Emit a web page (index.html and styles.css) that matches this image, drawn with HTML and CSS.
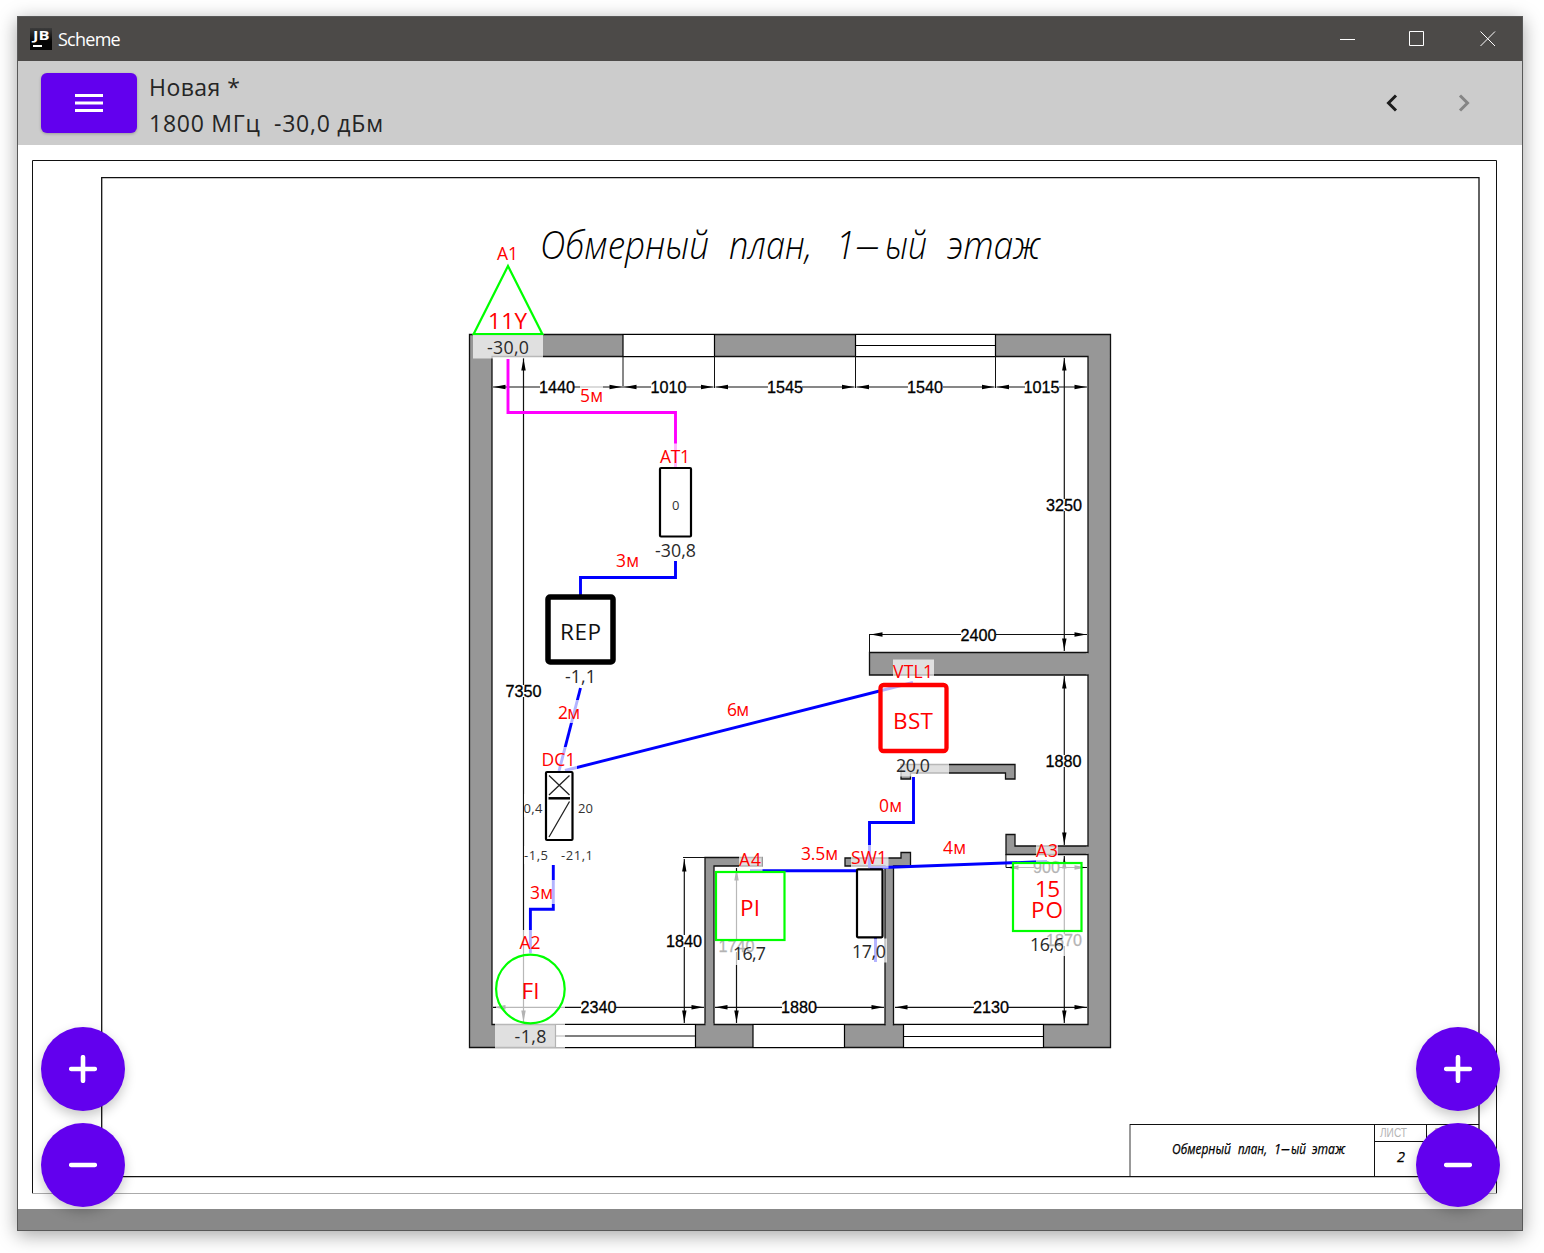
FILE: index.html
```html
<!DOCTYPE html>
<html lang="ru">
<head>
<meta charset="utf-8">
<title>Scheme</title>
<link rel="stylesheet" href="styles.css">
</head>
<body>
<div class="window">
  <header class="titlebar">
    <svg class="logo" viewBox="0 0 22 22" width="22" height="22">
      <defs><linearGradient id="lg" x1="0" y1="0" x2="0" y2="1"><stop offset="0" stop-color="#3c3c3c"/><stop offset="0.6" stop-color="#050505"/></linearGradient></defs>
      <rect width="22" height="22" fill="url(#lg)"/>
      <text x="3" y="12.4" textLength="16.500" lengthAdjust="spacingAndGlyphs">JB</text>
      <rect x="3" y="17" width="9" height="2" fill="#fff"/>
    </svg>
    <span class="app-name">Scheme</span>
    <svg class="win-controls" viewBox="0 0 156 16" width="156" height="16">
      <path d="M0 8.5H15M69.5 .5h14v14h-14zM140.5 .5l14.5 14.5M155 .5l-14.500 14.500"/>
    </svg>
  </header>
  <div class="toolbar">
    <button class="menu" aria-label="Меню"><svg viewBox="0 0 28 18" width="28" height="18"><path d="M0 1.500H28M0 9H28M0 16.500H28"/></svg></button>
    <div class="info">
      <div class="name">Новая *</div>
      <div class="params">1800 МГц&nbsp; -30,0 дБм</div>
    </div>
    <div class="history">
      <svg viewBox="0 0 12 18" width="12" height="18"><path class="on" d="M10 1.500L2.500 9L10 16.500"/></svg>
      <svg viewBox="0 0 12 18" width="12" height="18"><path class="off" d="M2 1.500L9.500 9L2 16.500"/></svg>
    </div>
  </div>
  <main class="canvas">
    <svg class="plan" viewBox="18 145 1504 1064" width="1504" height="1064">
      <defs>
        <marker id="arr" viewBox="0 0 13 6" markerWidth="13" markerHeight="6" refX="13" refY="3" orient="auto-start-reverse" markerUnits="userSpaceOnUse"><path d="M12.500 3L.5 .8V5.200z" fill="#000"/></marker>
      </defs>
      <!-- sheet frames -->
      <path class="thin" d="M32.500 1193.500V160.500H1496.500V1193.500"/>
      <path class="faint" d="M32 1193.500H1497"/>
      <path class="frame" d="M101.700 177.700H1479V1176.600H101.700z"/>
      <path class="faint2" d="M1130 1124V1176"/>
      <path class="thin" d="M1130 1124.500H1479M1374.500 1124V1176M1426.500 1124V1176M1374 1141.500H1479"/>
      <g class="gost stamp">
        <text x="1172" y="1154" textLength="59" lengthAdjust="spacingAndGlyphs">Обмерный</text>
        <text x="1238" y="1154" textLength="29" lengthAdjust="spacingAndGlyphs">план,</text>
        <text x="1274" y="1154" textLength="7" lengthAdjust="spacingAndGlyphs">1</text>
        <text x="1281" y="1154" textLength="9" lengthAdjust="spacingAndGlyphs">–</text>
        <text x="1291" y="1154" textLength="15" lengthAdjust="spacingAndGlyphs">ый</text>
        <text x="1312" y="1154" textLength="33" lengthAdjust="spacingAndGlyphs">этаж</text>
        <text x="1397" y="1162" textLength="8" lengthAdjust="spacingAndGlyphs">2</text>
      </g>
      <g class="sheet">
        <text x="1380" y="1137" textLength="27" lengthAdjust="spacingAndGlyphs">ЛИСТ</text>
        <text x="1433" y="1137" textLength="8" lengthAdjust="spacingAndGlyphs">Л</text>
      </g>
      <g class="gost heading">
        <text x="540" y="258.500" textLength="169" lengthAdjust="spacingAndGlyphs">Обмерный</text>
        <text x="729" y="258.500" textLength="83" lengthAdjust="spacingAndGlyphs">план,</text>
        <text x="836" y="258.500" textLength="19" lengthAdjust="spacingAndGlyphs">1</text>
        <text x="855" y="258.500" textLength="25" lengthAdjust="spacingAndGlyphs">–</text>
        <text x="885" y="258.500" textLength="42" lengthAdjust="spacingAndGlyphs">ый</text>
        <text x="947" y="258.500" textLength="93" lengthAdjust="spacingAndGlyphs">этаж</text>
      </g>

      <!-- walls -->
      <g class="wall">
        <path fill-rule="evenodd" d="M469.500 334.500H1110.500V1047.500H469.500zM492 356.500V1024.500H1088V356.500z"/>
        <path d="M705 1024.500V857.500H762V866H714V1024.500"/>
        <path d="M845 866V858H901V852.500H910.500V866H893.500V1024.500H885V866z"/>
        <path d="M1088 652.500H869.500V675H1088"/>
        <path d="M901 764.500H1015V779H1005.500V773H910.500V779H901z"/>
        <path d="M1088 846H1015V834.500H1006V854.500H1088"/>
      </g>
      <g class="patch"><path d="M705.700 1023h7.600v3h-7.600zM885.700 1023h7.100v3h-7.100zM1086 653.200h4v21.100h-4zM1086 846.700h4v7.100h-4z"/></g>
      <!-- openings -->
      <g class="opening">
        <path d="M623 334.500H714.500V356.500H623zM855.500 334.500H995.500V356.500H855.500zM855.500 345.500H995.500M555.500 1024.500H695.500V1047.500H555.500zM555.500 1036H695.500M753 1024.500H844.500V1047.500H753zM903.500 1024.500H1043.500V1047.500H903.500zM903.500 1036.500H1043.500"/>
      </g>
      <path class="thin" d="M623 356V388M714.500 356V388M855.500 356V388M995.500 356V388M869.500 634V653M683 857.500H705M1006 854V867.500"/>
      <!-- dimension lines -->
      <g class="dim">
        <path d="M493 387H622"/><path d="M624 387H713.500"/><path d="M715.500 387H854.500"/><path d="M856.500 387H994.500"/><path d="M996.500 387H1087"/>
        <path d="M523.500 358V1023"/><path d="M1064.300 358V651"/><path d="M1064.300 676V845"/><path d="M1064.300 856V1023"/>
        <path d="M870 634.500H1087"/><path d="M1006 867.500H1087"/>
        <path d="M684.300 859V1023"/><path d="M736.500 868V1023"/>
        <path d="M493 1007.300H704"/><path d="M715 1007.300H884"/><path d="M895 1007.300H1087"/>
      </g>
      <path class="gap" d="M540 380h34v14h-34zM651 380h35v14h-35zM768 380h34v14h-34zM908 380h35v14h-35zM1025 380h34v14h-34zM961 627h35v14h-35zM581 1000h35v14h-35zM782 1000h34v14h-34zM974 1000h34v14h-34zM1034 861h25v12h-25zM507 685h34v12h-34zM1047 499h34v12h-34zM1047 755h34v12h-34zM1047 934h34v12h-34zM667 935h34v12h-34zM720 940h34v12h-34z"/>
      <g class="dimtext">
        <text x="557" y="393">1440</text><text x="668.500" y="393">1010</text><text x="785" y="393">1545</text><text x="925" y="393">1540</text><text x="1041.500" y="393">1015</text>
        <text x="523.500" y="697">7350</text><text x="1064" y="511">3250</text><text x="978.500" y="640.500">2400</text><text x="1063.500" y="766.500">1880</text>
        <text x="1046.500" y="873">900</text><text x="1064" y="946">1870</text><text x="684" y="947">1840</text><text x="736.500" y="952">1740</text>
        <text x="598.500" y="1013">2340</text><text x="799" y="1013">1880</text><text x="991" y="1013">2130</text>
      </g>

      <!-- cables -->
      <g class="cable">
        <path class="feed" d="M508 359V412.500H675.500V467"/>
        <path d="M675.500 561V577.500H580.500V596"/>
        <path d="M580.500 688L559 771"/>
        <path d="M565 770.500L913 682.500"/>
        <path d="M553.300 865V909.300H530.400V953"/>
        <path d="M913.500 777V822.500H869.500V868"/>
        <path d="M750 870.700H858M870 868L1047 861.500M875.500 938V962"/>
      </g>
      <!-- translucent backings -->
      <g class="veil">
        <path d="M473 335h70v23.500h-70zM580 386h23v19h-23zM660 443.500h31v24h-31zM557 700h24v23h-24zM541 747h36v24h-36zM524 794h19v23h-19zM524 846h24v18h-24zM530 880h25v24h-25zM519 930h22v24h-22zM496 954h69v69h-69zM495 1023h70v25.500h-70z"/>
        <path d="M893 659.500h41v23.500h-41zM880 683h68v69h-68zM880 753h69v23.500h-69zM851 845h37.500v23.500h-37.500zM852 938.500h35v24h-35zM739 848h23.500v23h-23.500zM716 871h69v69h-69zM716 940h69v25h-69zM1036 838h22v24h-22zM1013 862h69v69h-69zM1013 931h69v25h-69z"/>
      </g>

      <!-- devices -->
      <path class="green" d="M508 266L542.300 334H473.700z"/>
      <rect class="green" x="716" y="872" width="68.500" height="68"/>
      <rect class="green" x="1013" y="863" width="68.500" height="68"/>
      <circle class="green" cx="530.400" cy="989" r="34.300"/>
      <rect class="blk" x="660" y="468" width="31" height="68.500" rx="1"/>
      <rect class="rep" x="548" y="597" width="65" height="65" rx="2"/>
      <rect class="bst" x="880.500" y="685" width="66" height="66" rx="3"/>
      <rect class="blk" x="546" y="772" width="26.500" height="68" rx="1"/>
      <path class="dc" d="M549 775.500L569.500 795M569.500 775.500L549 795M569.500 801.500L549 837"/>
      <path class="dcbar" d="M548.500 798.300H570"/>
      <rect class="blk" x="857" y="869.300" width="25.500" height="68" rx="1"/>

      <g class="label">
        <text x="497" y="260" textLength="21">A1</text><text x="580" y="402" textLength="23">5м</text><text x="660" y="463" textLength="30">AT1</text>
        <text x="616" y="567" textLength="23">3м</text><text x="558" y="719" textLength="22">2м</text><text x="727" y="716" textLength="22">6м</text>
        <text x="541.500" y="766" textLength="34">DC1</text><text x="893" y="678" textLength="40">VTL1</text><text x="879" y="812" textLength="23">0м</text>
        <text x="801" y="860" textLength="37">3.5м</text><text x="851" y="864" textLength="36">SW1</text><text x="943" y="854" textLength="23">4м</text>
        <text x="1036" y="857" textLength="22">A3</text><text x="739" y="866" textLength="22">A4</text><text x="530" y="899" textLength="23">3м</text><text x="519.500" y="949" textLength="21">A2</text>
      </g>
      <g class="kind">
        <text x="488" y="329" textLength="39">11Y</text><text x="893" y="728.500" textLength="40">BST</text><text x="740" y="916" textLength="20">PI</text><text x="521.500" y="999" textLength="18">FI</text>
        <text x="1035" y="897" textLength="25">15</text><text x="1031" y="918" textLength="32">PO</text><text class="dark" x="560" y="640" textLength="41">REP</text>
      </g>
      <g class="level">
        <text x="487" y="354" textLength="42">-30,0</text><text x="655" y="557" textLength="41">-30,8</text><text x="565" y="683" textLength="31">-1,1</text><text x="896" y="772" textLength="34">20,0</text>
        <text x="852" y="958" textLength="34">17,0</text><text x="733" y="960" textLength="33">16,7</text><text x="1030" y="951" textLength="34">16,6</text><text x="514.500" y="1043" textLength="32">-1,8</text>
      </g>
      <g class="small">
        <text x="672" y="510" textLength="7">0</text><text x="523.500" y="813" textLength="19">0,4</text><text x="578" y="813" textLength="15">20</text><text x="524" y="860" textLength="24">-1,5</text><text x="561" y="860" textLength="32">-21,1</text>
      </g>
    </svg>
    <div class="zoom left">
      <button class="fab" aria-label="Увеличить"><svg viewBox="0 0 28 28" width="28" height="28"><path d="M2.200 14H25.800M14 2.200V25.800"/></svg></button>
      <button class="fab" aria-label="Уменьшить"><svg viewBox="0 0 28 28" width="28" height="28"><path d="M2.200 14H25.800"/></svg></button>
    </div>
    <div class="zoom right">
      <button class="fab" aria-label="Увеличить"><svg viewBox="0 0 28 28" width="28" height="28"><path d="M2.200 14H25.800M14 2.200V25.800"/></svg></button>
      <button class="fab" aria-label="Уменьшить"><svg viewBox="0 0 28 28" width="28" height="28"><path d="M2.200 14H25.800"/></svg></button>
    </div>
  </main>
  <footer class="statusbar"></footer>
</div>
</body>
</html>
```
FILE: styles.css
```css
* { box-sizing: border-box; }
body {
  margin: 0;
  height: 1253px;
  padding: 16px 21px 22px 17px;
  background: #fff;
  overflow: hidden;
  font-family: "Open Sans", "Noto Sans", sans-serif;
}
.window {
  display: flex;
  flex-direction: column;
  height: 1215px;
  border: 1px solid #585858;
  background: #fff;
  box-shadow: 0 4px 18px rgba(0, 0, 0, .36);
}
.titlebar {
  display: flex;
  align-items: center;
  height: 44px;
  padding: 0 26px 0 12px;
  background: #4c4a48;
  color: #fff;
}
.logo { overflow: visible; }
.logo text { font: 700 13px "Open Sans", sans-serif; fill: #fff; }
.app-name { margin: 0 0 0 6px; font-size: 18px; line-height: 24px; letter-spacing: -.75px; }
.win-controls { margin-left: auto; fill: none; stroke: #fff; stroke-width: 1; }
.toolbar {
  display: flex;
  align-items: center;
  height: 84px;
  padding: 0 52px 0 23px;
  background: #ccc;
}
button { border: 0; padding: 0; display: flex; align-items: center; justify-content: center; background: #6200ee; }
.menu { width: 96px; height: 60px; border-radius: 6px; box-shadow: 0 1px 3px rgba(0, 0, 0, .25); }
.menu path { stroke: #fff; stroke-width: 3; }
.info { margin: 0 0 0 12px; padding-top: 4px; font-size: 23px; line-height: 36px; color: #252525; white-space: nowrap; }
.name { letter-spacing: .45px; }
.params { letter-spacing: .75px; }
.history { display: flex; gap: 60px; margin-left: auto; }
.history path { fill: none; stroke-width: 3; }
.history .on { stroke: #1c1c1c; }
.history .off { stroke: #858585; }
.canvas { position: relative; height: 1064px; }
.plan { display: block; }
.statusbar { height: 21px; background: #888; }

.zoom { position: absolute; bottom: 2px; display: flex; flex-direction: column; gap: 12px; }
.left { left: 23px; }
.right { right: 22px; }
.fab { width: 84px; height: 84px; border-radius: 50%; box-shadow: 0 5px 12px rgba(0, 0, 0, .22); }
.fab path { stroke: #fff; stroke-width: 4.600; stroke-linecap: round; }

.thin { fill: none; stroke: #111; stroke-width: 1; }
.frame { fill: none; stroke: #111; stroke-width: 1.300; }
.faint { fill: none; stroke: #aaa; }
.faint2 { fill: none; stroke: #999; stroke-width: 2; }
.wall path { fill: #979797; stroke: #111; stroke-width: 1.300; }
.patch { fill: #979797; }
.opening path { fill: #fff; stroke: #000; stroke-width: 1.200; }
.dim path { stroke: #111; stroke-width: 1.200; marker-start: url(#arr); marker-end: url(#arr); }
.gap { fill: #fff; }
.dimtext { font: 16.200px "Liberation Sans", Arial, sans-serif; text-anchor: middle; fill: #000; stroke: #000; stroke-width: .3px; }
.gost { font-family: "Open Sans", "Noto Sans", sans-serif; font-style: italic; fill: #000; }
.heading { font-size: 39px; font-weight: 300; }
.stamp { font-size: 14px; stroke: #000; stroke-width: .25px; }
.sheet { font: 13px "Liberation Sans", sans-serif; fill: #b4b4b4; }
.cable path { fill: none; stroke: #00f; stroke-width: 2.900; }
.cable .feed { stroke: #f0f; }
.veil { fill: #fff; fill-opacity: .7; }
.green { fill: none; stroke: #0f0; stroke-width: 2.200; }
.blk { fill: #fff; stroke: #000; stroke-width: 2.200; }
.rep { fill: #fff; stroke: #000; stroke-width: 5.500; }
.bst { fill: none; stroke: #f00; stroke-width: 4.300; }
.dc { stroke: #222; stroke-width: 1.300; fill: none; }
.dcbar { stroke: #000; stroke-width: 2.500; }
.label { font-size: 17.500px; fill: #f00; }
.kind { font-size: 22.500px; fill: #f00; }
.kind .dark { fill: #111; }
.level { font-size: 17.800px; fill: #2a2a2a; }
.small { font-size: 13px; fill: #333; }
```
